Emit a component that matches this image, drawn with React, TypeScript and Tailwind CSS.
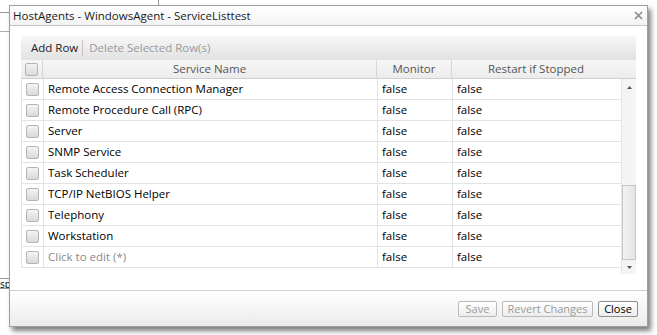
import React from 'react';

const services = [
  'Remote Access Connection Manager',
  'Remote Procedure Call (RPC)',
  'Server',
  'SNMP Service',
  'Task Scheduler',
  'TCP/IP NetBIOS Helper',
  'Telephony',
  'Workstation',
];

function Check() {
  return (
    <span className="block h-[13px] w-[13px] rounded-[2px] border border-[#b5b5b5] bg-gradient-to-b from-[#f4f4f4] to-[#d9d9d9]" />
  );
}

function Row({ name, placeholder }: { name: string; placeholder?: boolean }) {
  return (
    <div className="flex h-[21px] border-b border-[#e3e3e3]">
      <div className="flex w-[22px] items-center justify-center border-r border-[#e3e3e3]">
        <Check />
      </div>
      <div className={`flex w-[334px] items-center border-r border-[#e3e3e3] pl-[4px] ${placeholder ? 'text-[#8a8a8a]' : 'text-black'}`}>
        {name}
      </div>
      <div className="flex w-[75px] items-center border-r border-[#e3e3e3] pl-[4px]">false</div>
      <div className="flex flex-1 items-center pl-[4px]">false</div>
    </div>
  );
}

export default function App() {
  return (
    <div
      className="relative h-[335px] w-[657px] overflow-hidden bg-white text-[11.5px] text-black"
      style={{ fontFamily: '"Open Sans", "Noto Sans", sans-serif' }}
    >
      {/* page behind the dialog */}
      <div className="absolute left-0 top-[12px] h-px w-[10px] bg-[#9a9a9a]" />
      <div className="absolute left-0 top-[31px] h-px w-[10px] bg-[#b0b0b0]" />
      <div className="absolute left-[158px] top-0 h-[5px] w-px bg-[#9a9a9a]" />
      <div className="absolute left-0 top-[278px] flex h-[11px] w-[10px] items-center overflow-hidden border-y border-r border-[#9a9a9a] text-[10px] leading-none">
        sp
      </div>

      {/* dialog */}
      <div className="absolute left-[9px] top-[5px] flex h-[322px] w-[639px] flex-col border border-[#9e9e9e] bg-white shadow-[3px_4px_5px_rgba(0,0,0,0.5)]">
        <div className="flex h-[20px] items-center justify-between border-b border-[#c4c4c4] bg-gradient-to-b from-white to-[#f3f3f3] pl-[3px] pr-[4px]">
          <span className="text-[#1a1a1a]">HostAgents - WindowsAgent - ServiceListtest</span>
          <svg width="9" height="9" viewBox="0 0 9 9" className="text-[#8a8a8a]">
            <path d="M1 1 L8 8 M8 1 L1 8" stroke="currentColor" strokeWidth="1.6" />
          </svg>
        </div>

        <div className="flex flex-1 flex-col px-[11px] pt-[10px]">
          <div className="flex h-[24px] items-center rounded-t-[3px] bg-gradient-to-b from-[#f7f7f7] to-[#e2e2e2] pl-[10px]">
            <span className="text-[#222]">Add Row</span>
            <span className="ml-[4px] mr-[6px] h-[16px] w-px bg-[#c4c4c4]" />
            <span className="text-[#9a9a9a]">Delete Selected Row(s)</span>
          </div>

          <div className="flex h-[19px] border-b border-[#cfcfcf] bg-gradient-to-b from-[#f6f6f6] to-[#ececec] text-[#555]">
            <div className="flex w-[22px] items-center justify-center border-r border-[#d6d6d6]">
              <Check />
            </div>
            <div className="flex w-[334px] items-center justify-center border-r border-[#d6d6d6]">Service Name</div>
            <div className="flex w-[75px] items-center justify-center border-r border-[#d6d6d6]">Monitor</div>
            <div className="flex w-[168px] items-center justify-center">Restart if Stopped</div>
            <div className="flex-1" />
          </div>

          <div className="flex h-[195px]">
            <div className="flex flex-1 flex-col">
              <div className="border-l border-[#e3e3e3]">
                {services.map((s) => (
                  <Row key={s} name={s} />
                ))}
                <Row name="Click to edit (*)" placeholder />
              </div>
            </div>
            <div className="flex w-[15px] flex-col border-l border-[#e6e6e6] bg-[#f4f4f4]">
              <div className="flex h-[17px] items-center justify-center">
                <svg width="5" height="3" viewBox="0 0 5 3"><path d="M2.5 0 L5 3 L0 3 Z" fill="#555" /></svg>
              </div>
              <div className="mt-[89px] h-[75px] border border-[#c6c6c6] bg-gradient-to-r from-[#f2f2f2] to-[#e4e4e4]" />
              <div className="flex h-[14px] items-center justify-center">
                <svg width="5" height="3" viewBox="0 0 5 3"><path d="M0 0 L5 0 L2.5 3 Z" fill="#555" /></svg>
              </div>
            </div>
          </div>
        </div>

        <div className="flex h-[36px] items-center justify-end gap-[5px] border-t border-[#d0d0d0] bg-gradient-to-b from-white to-[#ebebeb] pr-[9px] text-[11px]">
          <button className="h-[16px] w-[39px] rounded-[2px] border border-[#b9b9b9] bg-gradient-to-b from-white to-[#ededed] leading-none text-[#9a9a9a]">Save</button>
          <button className="h-[16px] w-[91px] rounded-[2px] border border-[#b9b9b9] bg-gradient-to-b from-white to-[#ededed] leading-none text-[#9a9a9a]">Revert Changes</button>
          <button className="h-[16px] w-[40px] rounded-[2px] border border-[#8f8f8f] bg-gradient-to-b from-white to-[#ededed] leading-none text-black">Close</button>
        </div>
      </div>
    </div>
  );
}
